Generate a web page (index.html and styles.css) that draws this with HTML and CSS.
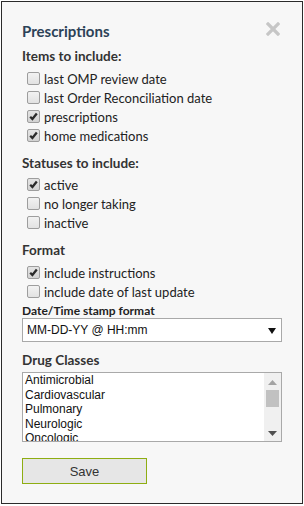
FILE: index.html
```html
<!DOCTYPE html>
<html>
<head>
<meta charset="utf-8">
<link rel="stylesheet" href="styles.css">
</head>
<body>
<div class="panel">
  <div class="title-row">
    <h1 class="title">Prescriptions</h1>
    <svg class="close" width="14" height="14" viewBox="0 0 14 14"><path d="M2 2 L12 12 M12 2 L2 12" stroke="#c6c6c6" stroke-width="3.2" stroke-linecap="square"/></svg>
  </div>

  <h2 class="heading h-first">Items to include:</h2>
  <div class="group">
    <label class="row"><span class="box"></span><span>last OMP review date</span></label>
    <label class="row"><span class="box"></span><span>last Order Reconciliation date</span></label>
    <label class="row"><span class="box checked"><svg viewBox="0 0 13 13" width="13" height="13"><path d="M3.2 6.8 L5.4 9 L9.8 3.6" fill="none" stroke="#2a2a2a" stroke-width="2.3"/></svg></span><span>prescriptions</span></label>
    <label class="row"><span class="box checked"><svg viewBox="0 0 13 13" width="13" height="13"><path d="M3.2 6.8 L5.4 9 L9.8 3.6" fill="none" stroke="#2a2a2a" stroke-width="2.3"/></svg></span><span>home medications</span></label>
  </div>

  <h2 class="heading">Statuses to include:</h2>
  <div class="group g-tight">
    <label class="row"><span class="box checked"><svg viewBox="0 0 13 13" width="13" height="13"><path d="M3.2 6.8 L5.4 9 L9.8 3.6" fill="none" stroke="#2a2a2a" stroke-width="2.3"/></svg></span><span>active</span></label>
    <label class="row"><span class="box"></span><span>no longer taking</span></label>
    <label class="row"><span class="box"></span><span>inactive</span></label>
  </div>

  <h2 class="heading">Format</h2>
  <div class="group">
    <label class="row"><span class="box checked"><svg viewBox="0 0 13 13" width="13" height="13"><path d="M3.2 6.8 L5.4 9 L9.8 3.6" fill="none" stroke="#2a2a2a" stroke-width="2.3"/></svg></span><span>include instructions</span></label>
    <label class="row"><span class="box"></span><span>include date of last update</span></label>
  </div>

  <div class="sublabel">Date/Time stamp format</div>
  <div class="select">
    <span>MM-DD-YY @ HH:mm</span>
    <svg class="caret" width="8" height="6" viewBox="0 0 8 6"><path d="M0 0 H8 L4 6 Z" fill="#111"/></svg>
  </div>

  <h2 class="heading">Drug Classes</h2>
  <div class="listbox">
    <div class="items">
      <div>Antimicrobial</div>
      <div>Cardiovascular</div>
      <div>Pulmonary</div>
      <div>Neurologic</div>
      <div>Oncologic</div>
    </div>
    <div class="scrollbar">
      <svg width="9" height="5" viewBox="0 0 9 5"><path d="M0 5 H9 L4.5 0 Z" fill="#a3a3a3"/></svg>
      <div class="thumb"></div>
      <div class="spacer"></div>
      <svg width="9" height="5" viewBox="0 0 9 5"><path d="M0 0 H9 L4.5 5 Z" fill="#505050"/></svg>
    </div>
  </div>

  <button class="save">Save</button>
</div>
</body>
</html>
```

FILE: styles.css
```css
* { box-sizing: border-box; }
html, body { margin: 0; padding: 0; background: #ffffff; }
body { padding: 1px 0 0 1px; }

.panel {
  width: 302px;
  height: 503px;
  border: 1px solid #2b2b2b;
  background: #f7f7f7;
  padding: 19px 20px 0 20px;
  font-family: Lato, "Open Sans", sans-serif;
  color: #333;
}

.title-row {
  display: flex;
  justify-content: space-between;
  align-items: center;
  height: 20px;
}
.title {
  margin: 0;
  font-size: 15px;
  font-weight: bold;
  color: #2c4257;
  line-height: 20px;
}
.close { margin-right: 2px; margin-top: -4px; }

.heading {
  margin: 9px 0 0 0;
  font-size: 13.5px;
  font-weight: bold;
  line-height: 18px;
  height: 18px;
  color: #333;
}
.h-first { margin-top: 6px; }

.group { margin-top: 4px; display: flex; flex-direction: column; }
.g-tight { margin-top: 3px; }

.row {
  display: flex;
  align-items: center;
  height: 19px;
  padding-left: 5px;
  font-size: 13px;
  color: #222;
}
.box {
  width: 13px;
  height: 13px;
  border: 1px solid #9d9d9d;
  border-radius: 2px;
  background: linear-gradient(#f2f2f2, #e2e2e2);
  margin-right: 4px;
  flex: none;
  position: relative;
}
.box.checked { background: linear-gradient(#e4e4e4, #d2d2d2); }
.box svg { position: absolute; left: -1px; top: -1px; }

.sublabel {
  margin-top: 2px;
  height: 15px;
  line-height: 15px;
  font-size: 12px;
  font-weight: bold;
  color: #222;
}

.select {
  height: 24px;
  border: 1px solid #a9a9a9;
  background: #fff;
  display: flex;
  align-items: center;
  justify-content: space-between;
  padding: 0 5px 0 4px;
  font-family: "Liberation Sans", Arial, sans-serif;
  font-size: 12px;
  color: #111;
}
.caret { margin-top: 1px; }

.listbox {
  margin-top: 3px;
  height: 70px;
  border: 1px solid #a9a9a9;
  background: #fff;
  display: flex;
  overflow: hidden;
}
.items {
  flex: 1;
  padding: 0 0 0 2px;
  font-family: "Liberation Sans", Arial, sans-serif;
  font-size: 12px;
  line-height: 14.5px;
  color: #111;
  overflow: hidden;
}
.scrollbar {
  width: 17px;
  background: #f0f0f0;
  display: flex;
  flex-direction: column;
  align-items: center;
  padding: 7px 0 5px 0;
}
.thumb {
  width: 13px;
  height: 17px;
  background: #c1c1c1;
  margin-top: 5px;
}
.spacer { flex: 1; }

.save {
  display: block;
  margin-top: 16px;
  width: 125px;
  height: 26px;
  border: 1px solid #8ead12;
  background: #e6e6e6;
  font-family: "Liberation Sans", Arial, sans-serif;
  font-size: 13px;
  color: #333;
  padding: 0;
}
```
